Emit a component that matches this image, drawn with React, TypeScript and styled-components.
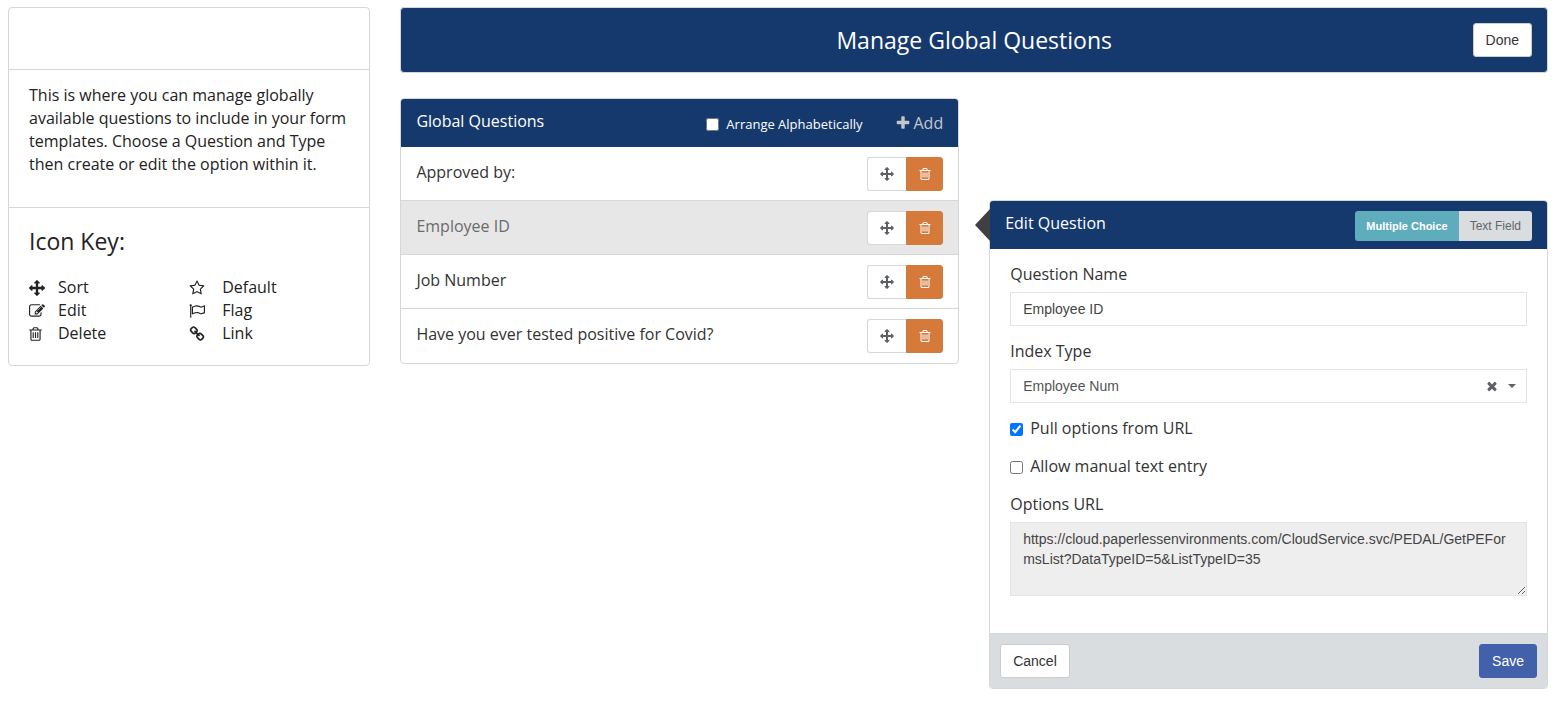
import React, { useState } from 'react';
import styled, { createGlobalStyle, css } from 'styled-components';

const display = '"Open Sans", "Noto Sans", sans-serif';
const body = '"Liberation Sans", Arial, sans-serif';
const navy = '#16396d';
const line = '#d5d7d9';
const ink = '#222';

const GlobalStyle = createGlobalStyle`
  *, *::before, *::after { box-sizing: border-box; }
  body { margin: 0; background: #fff; color: ${ink}; font: 16px/23px ${display}; }
  h1, h2, p, ul, dl { margin: 0; padding: 0; font-weight: 400; }
`;

const paths = {
  move: 'M1792 896q0 26-19 45l-256 256q-19 19-45 19t-45-19-19-45v-128h-384v384h128q26 0 45 19t19 45-19 45l-256 256q-19 19-45 19t-45-19l-256-256q-19-19-19-45t19-45 45-19h128v-384h-384v128q0 26-19 45t-45 19-45-19l-256-256q-19-19-19-45t19-45l256-256q19-19 45-19t45 19 19 45v128h384v-384h-128q-26 0-45-19t-19-45 19-45l256-256q19-19 45-19t45 19l256 256q19 19 19 45t-19 45-45 19h-128v384h384v-128q0-26 19-45t45-19 45 19l256 256q19 19 19 45z',
  trash: 'M704 736v576q0 14-9 23t-23 9h-64q-14 0-23-9t-9-23v-576q0-14 9-23t23-9h64q14 0 23 9t9 23zm256 0v576q0 14-9 23t-23 9h-64q-14 0-23-9t-9-23v-576q0-14 9-23t23-9h64q14 0 23 9t9 23zm256 0v576q0 14-9 23t-23 9h-64q-14 0-23-9t-9-23v-576q0-14 9-23t23-9h64q14 0 23 9t9 23zm128 724v-948h-896v948q0 22 7 40.5t14.5 27 10.5 8.5h832q3 0 10.5-8.5t14.5-27 7-40.5zm-672-1076h448l-48-117q-7-9-17-11h-317q-10 2-17 11zm928 32v64q0 14-9 23t-23 9h-96v948q0 83-47 143.5t-113 60.5h-832q-66 0-113-58.5t-47-141.5v-952h-96q-14 0-23-9t-9-23v-64q0-14 9-23t23-9h309l70-167q15-37 54-63t79-26h320q40 0 79 26t54 63l70 167h309q14 0 23 9t9 23z',
  edit: 'M888 1184l116-116-152-152-116 116v56h96v96h56zm440-720q-16-16-33 1l-350 350q-17 17-1 33t33-1l350-350q17-17 1-33zm80 594v190q0 119-84.5 203.5t-203.5 84.5h-832q-119 0-203.5-84.5t-84.5-203.5v-832q0-119 84.5-203.5t203.5-84.5h832q63 0 117 25 15 7 18 23 3 17-9 29l-49 49q-14 14-32 8-23-6-45-6h-832q-66 0-113 47t-47 113v832q0 66 47 113t113 47h832q66 0 113-47t47-113v-126q0-13 9-22l64-64q15-15 35-7t20 29zm-96-738l288 288-672 672h-288v-288zm444 132l-92 92-288-288 92-92q28-28 68-28t68 28l152 152q28 28 28 68t-28 68z',
  star: 'M1201 1004l306-297-422-62-189-382-189 382-422 62 306 297-73 421 378-199 377 199zm527-357q0 22-26 48l-363 354 86 500q1 7 1 20 0 50-41 50-19 0-40-12l-449-236-449 236q-22 12-40 12-21 0-31.5-14.5t-10.5-35.5q0-6 2-20l86-500-364-354q-25-27-25-48 0-37 56-46l502-73 225-455q19-41 49-41t49 41l225 455 502 73q56 9 56 46z',
  flag: 'M1664 1045v-616q-169 91-306 91-82 0-145-32-100-49-184-76.5t-178-27.5q-173 0-403 127v599q245-113 433-113 55 0 103.5 7.5t98 26 77 31 82.5 39.5l28 14q44 22 101 22 120 0 293-92zm-1344-789q0 35-17.5 64t-46.5 46v1266q0 14-9 23t-23 9h-64q-14 0-23-9t-9-23v-1266q-29-17-46.5-46t-17.5-64q0-53 37.5-90.5t90.5-37.5 90.5 37.5 37.5 90.5zm1472 64v763q0 39-35 57-10 5-17 9-218 116-369 116-88 0-158-35l-28-14q-64-33-99-48t-91-29-114-14q-102 0-235.5 44t-228.5 102q-15 9-33 9-16 0-32-8-32-19-32-56v-742q0-35 31-55 35-21 78.5-42.5t114-52 152.5-49.5 155-19q112 0 209 31t209 86q38 19 89 19 122 0 310-112 22-12 31-17 31-16 62 2 31 20 31 55z',
  link: 'M1520 1216q0-40-28-68l-208-208q-28-28-68-28-42 0-72 32 3 3 19 18.5t21.5 21.5 15 19 13 25.5 3.5 27.5q0 40-28 68t-68 28q-15 0-27.5-3.5t-25.5-13-19-15-21.5-21.5-18.5-19q-33 31-33 73 0 40 28 68l206 207q27 27 68 27 40 0 68-26l147-146q28-28 28-67zm-703-705q0-40-28-68l-206-207q-28-28-68-28-39 0-68 27l-147 146q-28 28-28 67 0 40 28 68l208 208q27 27 68 27 42 0 72-31-3-3-19-18.5t-21.5-21.5-15-19-13-25.5-3.5-27.5q0-40 28-68t68-28q15 0 27.5 3.5t25.5 13 19 15 21.5 21.5 18.5 19q33-31 33-73zm895 705q0 120-85 203l-147 146q-83 83-203 83-121 0-204-85l-206-207q-83-83-83-203 0-123 88-209l-88-88q-86 88-208 88-120 0-204-84l-208-208q-84-84-84-204t85-203l147-146q83-83 203-83 121 0 204 85l206 207q83 83 83 203 0 123-88 209l88 88q86-88 208-88 120 0 204 84l208 208q84 84 84 204z',
  plus: 'M1600 736v192q0 40-28 68t-68 28h-416v416q0 40-28 68t-68 28h-192q-40 0-68-28t-28-68v-416h-416q-40 0-68-28t-28-68v-192q0-40 28-68t68-28h416v-416q0-40 28-68t68-28h192q40 0 68 28t28 68v416h416q40 0 68 28t28 68z',
  times: 'M1490 1322q0 40-28 68l-136 136q-28 28-68 28t-68-28l-294-294-294 294q-28 28-68 28t-68-28l-136-136q-28-28-28-68t28-68l294-294-294-294q-28-28-28-68t28-68l136-136q28-28 68-28t68 28l294 294 294-294q28-28 68-28t68 28l136 136q28 28 28 68t-28 68l-294 294 294 294q28 28 28 68z',
};
type IconName = keyof typeof paths;

const Svg = styled.svg`
  display: block;
  flex: none;
  fill: currentColor;
`;
const Icon = ({ name, size = 16 }: { name: IconName; size?: number }) => {
  const narrow = name === 'trash';
  return (
    <Svg
      width={narrow ? Math.ceil(size * 0.79) : size}
      height={size}
      viewBox={narrow ? '192 0 1408 1792' : '0 0 1792 1792'}
      aria-hidden="true"
    >
      <path d={paths[name]} />
    </Svg>
  );
};

const Page = styled.div`
  display: grid;
  grid-template-columns: 24fr 76fr;
  gap: 30px;
  align-items: start;
  padding: 7px 16px 15px 8px;
`;

const frame = css`
  border: 1px solid ${line};
  border-radius: 4px;
  background: #fff;
`;

const Sidebar = styled.aside`
  ${frame}
`;
const SideSection = styled.section<{ $height: number }>`
  min-height: ${p => p.$height}px;
  padding: 14px 20px;
  & + & { border-top: 1px solid ${line}; }
`;
const KeyTitle = styled.h2`
  margin: 4px 0 20px;
  font-size: 23px;
  line-height: 30px;
`;
const KeyGrid = styled.ul`
  display: grid;
  grid-template: repeat(3, 23px) / 1fr 1fr;
  grid-auto-flow: column;
  list-style: none;
`;
const KeyItem = styled.li<{ $indent: number }>`
  display: grid;
  grid-template-columns: ${p => p.$indent}px 1fr;
  align-items: center;
`;

const Main = styled.main`
  display: flex;
  flex-direction: column;
  gap: 25px;
  min-width: 0;
`;
const TitleBar = styled.header`
  ${frame}
  display: grid;
  grid-template-columns: 1fr auto 1fr;
  align-items: center;
  padding: 15px;
  background: ${navy};
  color: #fff;
  h1 { grid-column: 2; font-size: 23px; line-height: 30px; }
  button { justify-self: end; }
`;
const Columns = styled.div`
  display: grid;
  grid-template-columns: 1fr 1fr;
  gap: 30px;
  align-items: start;
`;
const Panel = styled.section`
  ${frame}
  position: relative;
  min-width: 0;
`;
const EditPanel = styled(Panel)`
  margin-top: 102px;
  &::before {
    content: '';
    position: absolute;
    left: -15px;
    top: 8px;
    border: solid transparent;
    border-width: 16px 15px 16px 0;
    border-right-color: #404044;
  }
`;
const PanelHead = styled.div`
  display: flex;
  align-items: center;
  min-height: 48px;
  padding: 2px 15px 0;
  border-radius: 3px 3px 0 0;
  background: ${navy};
  color: #fff;
  h2 { flex: 1; padding-bottom: 6px; font-size: 16px; }
`;
const ArrangeLabel = styled.label`
  display: flex;
  align-items: center;
  gap: 7px;
  margin-right: 33px;
  font-size: 13px;
  input { width: 13px; height: 13px; margin: 0; }
`;
const AddButton = styled.button`
  display: flex;
  align-items: center;
  gap: 2px;
  padding: 0 0 2px;
  border: 0;
  background: none;
  color: #c3c7cc;
  font: 16px/23px ${display};
`;
const QuestionList = styled.ul`
  padding-bottom: 1px;
  list-style: none;
`;
const QuestionRow = styled.li<{ $active: boolean }>`
  display: flex;
  align-items: center;
  justify-content: space-between;
  padding: 10px 15px 9px;
  background: ${p => (p.$active ? '#e7e7e7' : 'transparent')};
  color: ${p => (p.$active ? '#6b6b6b' : '#333')};
  & + & { border-top: 1px solid ${line}; }
  > span { padding-bottom: 4px; }
`;
const ButtonGroup = styled.div`
  display: flex;
`;
const IconButton = styled.button<{ $danger?: boolean }>`
  display: flex;
  align-items: center;
  justify-content: center;
  width: ${p => (p.$danger ? 37 : 39)}px;
  height: 34px;
  padding: 0;
  border: 1px solid ${p => (p.$danger ? '#d67a3c' : line)};
  border-right-width: ${p => (p.$danger ? 1 : 0)}px;
  border-radius: ${p => (p.$danger ? '0 3px 3px 0' : '3px 0 0 3px')};
  background: ${p => (p.$danger ? '#d67a3c' : '#fff')};
  color: ${p => (p.$danger ? '#fff' : '#5d6166')};
`;

const Button = styled.button<{ $primary?: boolean }>`
  height: 34px;
  padding: 0 12px;
  border: 1px solid ${p => (p.$primary ? '#4360aa' : '#ccc')};
  border-radius: 3px;
  background: ${p => (p.$primary ? '#4360aa' : '#fff')};
  color: ${p => (p.$primary ? '#fff' : '#333')};
  font: 14px/20px ${body};
`;
const Toggle = styled.button<{ $on: boolean }>`
  height: 30px;
  padding: 0 11px;
  border: 0;
  background: ${p => (p.$on ? '#5facbd' : '#d9dde0')};
  color: ${p => (p.$on ? '#fff' : '#63676b')};
  font: ${p => (p.$on ? '700 11px' : '400 12px')}/18px ${body};
  &:first-child { border-radius: 3px 0 0 3px; }
  &:last-child { border-radius: 0 3px 3px 0; }
`;

const Form = styled.form`
  color: #333;
`;
const Fields = styled.div`
  display: flex;
  flex-direction: column;
  gap: 14px;
  padding: 14px 20px 37px;
`;
const Field = styled.div`
  display: flex;
  flex-direction: column;
  gap: 7px;
  label { line-height: 22px; }
`;
const control = css`
  display: block;
  width: 100%;
  padding: 6px 12px;
  border: 1px solid #e3e4e5;
  border-radius: 0;
  background: #fff;
  color: #444;
  font: 14px/20px ${body};
`;
const Input = styled.input`
  ${control}
  height: 34px;
`;
const Select = styled.select`
  ${control}
  height: 34px;
  appearance: none;
  color: #555;
`;
const SelectWrap = styled.div`
  position: relative;
`;
const SelectTools = styled.div`
  position: absolute;
  inset: 0 11px 0 auto;
  display: flex;
  align-items: center;
  gap: 9px;
  color: #5d6166;
  pointer-events: none;
`;
const ClearButton = styled.button`
  padding: 0;
  border: 0;
  background: none;
  color: inherit;
  pointer-events: auto;
`;
const Caret = styled.span`
  border: solid transparent;
  border-width: 4px 4px 0;
  border-top-color: currentColor;
`;
const CheckLabel = styled.label`
  display: flex;
  align-items: center;
  gap: 7px;
  padding-bottom: 2px;
  line-height: 22px;
  input { width: 13px; height: 13px; margin: 2px 0 0; accent-color: #0075ff; }
`;
const Textarea = styled.textarea`
  ${control}
  height: 74px;
  background: #eee;
  resize: vertical;
  word-break: break-all;
`;
const Footer = styled.div`
  display: flex;
  justify-content: space-between;
  padding: 10px;
  border-top: 1px solid ${line};
  border-radius: 0 0 3px 3px;
  background: #d9dde0;
`;

const keyItems: [IconName, string][] = [
  ['move', 'Sort'],
  ['edit', 'Edit'],
  ['trash', 'Delete'],
  ['star', 'Default'],
  ['flag', 'Flag'],
  ['link', 'Link'],
];
const questions = ['Approved by:', 'Employee ID', 'Job Number', 'Have you ever tested positive for Covid?'];

export default function App() {
  const [mode, setMode] = useState('Multiple Choice');
  const [active, setActive] = useState('Employee ID');
  return (
    <>
      <GlobalStyle />
      <Page>
        <Sidebar>
          <SideSection $height={61} />
          <SideSection $height={138}>
            <p>
              This is where you can manage globally available questions to include in your form
              templates. Choose a Question and Type then create or edit the option within it.
            </p>
          </SideSection>
          <SideSection $height={158}>
            <KeyTitle>Icon Key:</KeyTitle>
            <KeyGrid>
              {keyItems.map(([name, label], i) => (
                <KeyItem key={label} $indent={i < 3 ? 29 : 33}>
                  <Icon name={name} />
                  {label}
                </KeyItem>
              ))}
            </KeyGrid>
          </SideSection>
        </Sidebar>
        <Main>
          <TitleBar>
            <h1>Manage Global Questions</h1>
            <Button type="button">Done</Button>
          </TitleBar>
          <Columns>
            <Panel>
              <PanelHead>
                <h2>Global Questions</h2>
                <ArrangeLabel>
                  <input type="checkbox" />
                  Arrange Alphabetically
                </ArrangeLabel>
                <AddButton type="button">
                  <Icon name="plus" />
                  Add
                </AddButton>
              </PanelHead>
              <QuestionList>
                {questions.map(q => (
                  <QuestionRow key={q} $active={q === active} onClick={() => setActive(q)}>
                    <span>{q}</span>
                    <ButtonGroup>
                      <IconButton type="button" aria-label={`Sort ${q}`}>
                        <Icon name="move" size={14} />
                      </IconButton>
                      <IconButton type="button" $danger aria-label={`Delete ${q}`}>
                        <Icon name="trash" size={14} />
                      </IconButton>
                    </ButtonGroup>
                  </QuestionRow>
                ))}
              </QuestionList>
            </Panel>
            <EditPanel>
              <PanelHead>
                <h2>Edit Question</h2>
                <ButtonGroup>
                  {['Multiple Choice', 'Text Field'].map(m => (
                    <Toggle key={m} type="button" $on={m === mode} onClick={() => setMode(m)}>
                      {m}
                    </Toggle>
                  ))}
                </ButtonGroup>
              </PanelHead>
              <Form onSubmit={e => e.preventDefault()}>
                <Fields>
                  <Field>
                    <label htmlFor="name">Question Name</label>
                    <Input id="name" defaultValue="Employee ID" />
                  </Field>
                  <Field>
                    <label htmlFor="index">Index Type</label>
                    <SelectWrap>
                      <Select id="index">
                        <option>Employee Num</option>
                      </Select>
                      <SelectTools>
                        <ClearButton type="button" aria-label="Clear">
                          <Icon name="times" size={14} />
                        </ClearButton>
                        <Caret />
                      </SelectTools>
                    </SelectWrap>
                  </Field>
                  <CheckLabel>
                    <input type="checkbox" defaultChecked />
                    Pull options from URL
                  </CheckLabel>
                  <CheckLabel>
                    <input type="checkbox" />
                    Allow manual text entry
                  </CheckLabel>
                  <Field>
                    <label htmlFor="url">Options URL</label>
                    <Textarea
                      id="url"
                      readOnly
                      spellCheck={false}
                      defaultValue="https://cloud.paperlessenvironments.com/CloudService.svc/PEDAL/GetPEFormsList?DataTypeID=5&ListTypeID=35"
                    />
                  </Field>
                </Fields>
                <Footer>
                  <Button type="button">Cancel</Button>
                  <Button type="submit" $primary>Save</Button>
                </Footer>
              </Form>
            </EditPanel>
          </Columns>
        </Main>
      </Page>
    </>
  );
}
